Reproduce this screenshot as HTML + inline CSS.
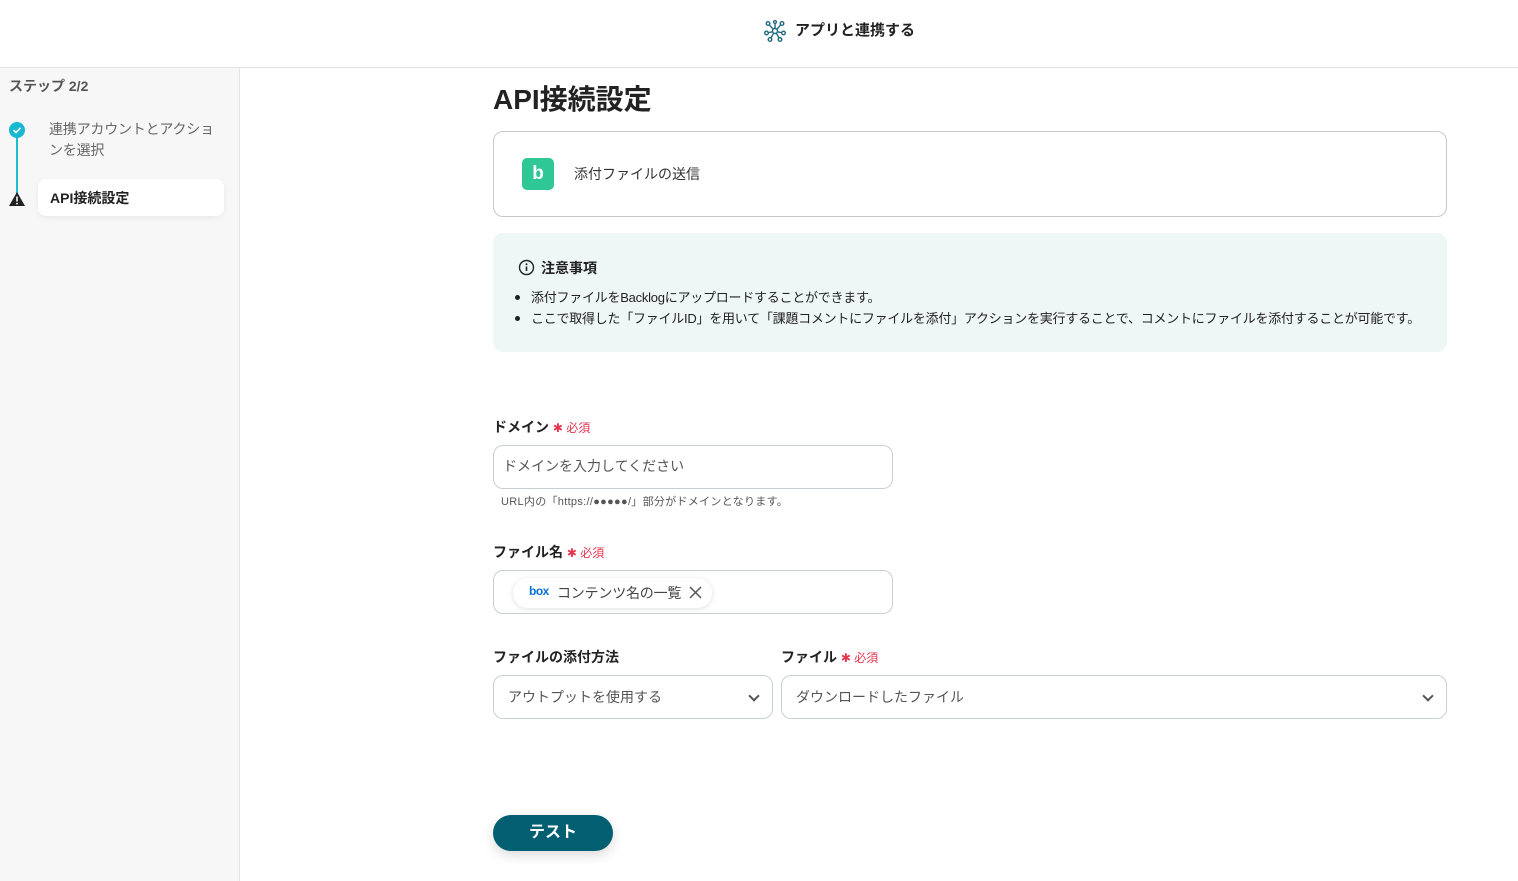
<!DOCTYPE html>
<html><head><meta charset="utf-8"><style>
*{box-sizing:border-box;margin:0;padding:0}
body{width:1518px;height:881px;overflow:hidden;background:#fff;font-family:"Liberation Sans","Noto Sans CJK JP",sans-serif;color:#333;position:relative}
.a{position:absolute}
.hdr{left:0;top:0;width:1518px;height:68px;border-bottom:1px solid #e2e2e2;background:#fff}
.side{left:0;top:68px;width:240px;height:813px;background:#f7f7f7;border-right:1px solid #e4e4e4}
.lbl{font-size:14px;font-weight:bold;color:#222}
.req{color:#e6354f;font-size:12px;font-weight:normal}
.inp{border:1px solid #c9ced6;border-radius:10px;background:#fff}
.ph{font-size:14px;color:#555}
.chev{width:8px;height:8px;border-right:2px solid #555;border-bottom:2px solid #555;transform:rotate(45deg)}
.bl{position:relative;padding-left:16px}
.bl:before{content:"";position:absolute;left:0;top:8px;width:5px;height:5px;border-radius:50%;background:#222}
</style></head><body>
<div class="a hdr"></div>
<svg class="a" style="left:764px;top:20px" width="22" height="22" viewBox="0 0 22 22" fill="none" stroke="#1f6b80" stroke-width="1.4"><circle cx="11" cy="11" r="2.5"/><circle cx="4" cy="3.5" r="1.8"/><circle cx="18" cy="3.5" r="1.8"/><circle cx="2.5" cy="13" r="1.8"/><circle cx="19.5" cy="13" r="1.8"/><circle cx="6" cy="19.5" r="1.8"/><circle cx="16" cy="19.5" r="1.8"/><circle cx="11" cy="2" r="1.4"/><path d="M9.3 9.3 5.2 4.8M12.7 9.3l4.1-4.5M8.6 11.8 4.2 12.7M13.4 11.8l4.4.9M9.6 13.2 7 18M12.4 13.2 15 18M11 8.5V3.4"/></svg>
<div class="a" style="left:795px;top:19px;font-size:15px;font-weight:bold;color:#222">アプリと連携する</div>
<div class="a side"></div>
<div class="a" style="left:9px;top:76px;font-size:14px;font-weight:bold;color:#555">ステップ 2/2</div>
<div class="a" style="left:16px;top:130px;width:2px;height:68px;background:#1bbfcf"></div>
<div class="a" style="left:9px;top:122px;width:16px;height:16px;border-radius:50%;background:#18b8d0"></div>
<svg class="a" style="left:9px;top:122px" width="16" height="16"><path d="M4.5 8.2 7 10.5 11.5 5.8" stroke="#fff" stroke-width="1.6" fill="none"/></svg>
<div class="a" style="left:49px;top:119px;font-size:14px;line-height:21px;color:#666;width:170px;letter-spacing:-0.2px">連携アカウントとアクショ<br>ンを選択</div>
<svg class="a" style="left:8px;top:191px" width="18" height="16"><path d="M9 1 17 15H1Z" fill="#222"/><path d="M9 5.5v5" stroke="#fff" stroke-width="1.6"/><circle cx="9" cy="12.6" r=".9" fill="#fff"/></svg>
<div class="a" style="left:38px;top:179px;width:186px;height:37px;background:#fff;border-radius:8px;box-shadow:0 2px 6px rgba(0,0,0,.06)"></div>
<div class="a" style="left:50px;top:188px;font-size:14px;font-weight:bold;color:#222">API接続設定</div>

<div class="a" style="left:493px;top:78px;font-size:28px;font-weight:bold;color:#222">API接続設定</div>
<div class="a" style="left:493px;top:131px;width:954px;height:86px;border:1px solid #c8c8c8;border-radius:10px"></div>
<div class="a" style="left:522px;top:158px;width:32px;height:32px;border-radius:5px;background:#2ec795;color:#fff;font-weight:900;font-size:19px;text-align:center;line-height:31px">b</div>
<div class="a" style="left:574px;top:164px;font-size:14px;color:#333">添付ファイルの送信</div>

<div class="a" style="left:493px;top:233px;width:954px;height:119px;background:#eff7f6;border-radius:10px"></div>
<svg class="a" style="left:518px;top:259px" width="17" height="17"><circle cx="8.5" cy="8.5" r="7" fill="none" stroke="#222" stroke-width="1.4"/><path d="M8.5 7.5v4.5" stroke="#222" stroke-width="1.6"/><circle cx="8.5" cy="5.2" r="1" fill="#222"/></svg>
<div class="a" style="left:541px;top:258px;font-size:14px;font-weight:bold;color:#222">注意事項</div>
<div class="a" style="left:515px;top:287px;font-size:13px;line-height:21px;color:#222;letter-spacing:-0.25px;white-space:nowrap">
<div class="bl">添付ファイルをBacklogにアップロードすることができます。</div>
<div class="bl">ここで取得した「ファイルID」を用いて「課題コメントにファイルを添付」アクションを実行することで、コメントにファイルを添付することが可能です。</div></div>

<div class="a lbl" style="left:493px;top:417px">ドメイン <span class="req">✱ 必須</span></div>
<div class="a inp" style="left:493px;top:445px;width:400px;height:44px"></div>
<div class="a ph" style="left:503px;top:456px">ドメインを入力してください</div>
<div class="a" style="left:501px;top:493px;font-size:11px;color:#555;letter-spacing:0.3px">URL内の「https://●●●●●/」部分がドメインとなります。</div>

<div class="a lbl" style="left:493px;top:542px">ファイル名 <span class="req">✱ 必須</span></div>
<div class="a inp" style="left:493px;top:570px;width:400px;height:44px"></div>
<div class="a" style="left:513px;top:578px;width:199px;height:30px;border-radius:15px;background:#fff;box-shadow:0 1px 6px rgba(0,0,0,.13)"></div>
<div class="a" style="left:529px;top:584px;font-size:12px;font-weight:bold;color:#0b6fd1;letter-spacing:-0.5px">box</div>
<div class="a ph" style="left:557px;top:583px;color:#444;letter-spacing:-0.2px">コンテンツ名の一覧</div>
<svg class="a" style="left:689px;top:586px" width="13" height="13"><path d="M1 1l11 11M12 1 1 12" stroke="#555" stroke-width="1.5"/></svg>

<div class="a lbl" style="left:493px;top:647px">ファイルの添付方法</div>
<div class="a lbl" style="left:781px;top:647px">ファイル <span class="req">✱ 必須</span></div>
<div class="a inp" style="left:493px;top:675px;width:280px;height:44px"></div>
<div class="a ph" style="left:508px;top:687px">アウトプットを使用する</div>
<div class="a chev" style="left:750px;top:692px"></div>
<div class="a inp" style="left:781px;top:675px;width:666px;height:44px"></div>
<div class="a ph" style="left:796px;top:687px">ダウンロードしたファイル</div>
<div class="a chev" style="left:1424px;top:692px"></div>

<div class="a" style="left:493px;top:815px;width:120px;height:36px;border-radius:18px;background:#025f72;color:#fff;font-size:16px;font-weight:bold;text-align:center;line-height:36px;box-shadow:0 4px 12px rgba(0,0,0,.15)">テスト</div>
</body></html>
